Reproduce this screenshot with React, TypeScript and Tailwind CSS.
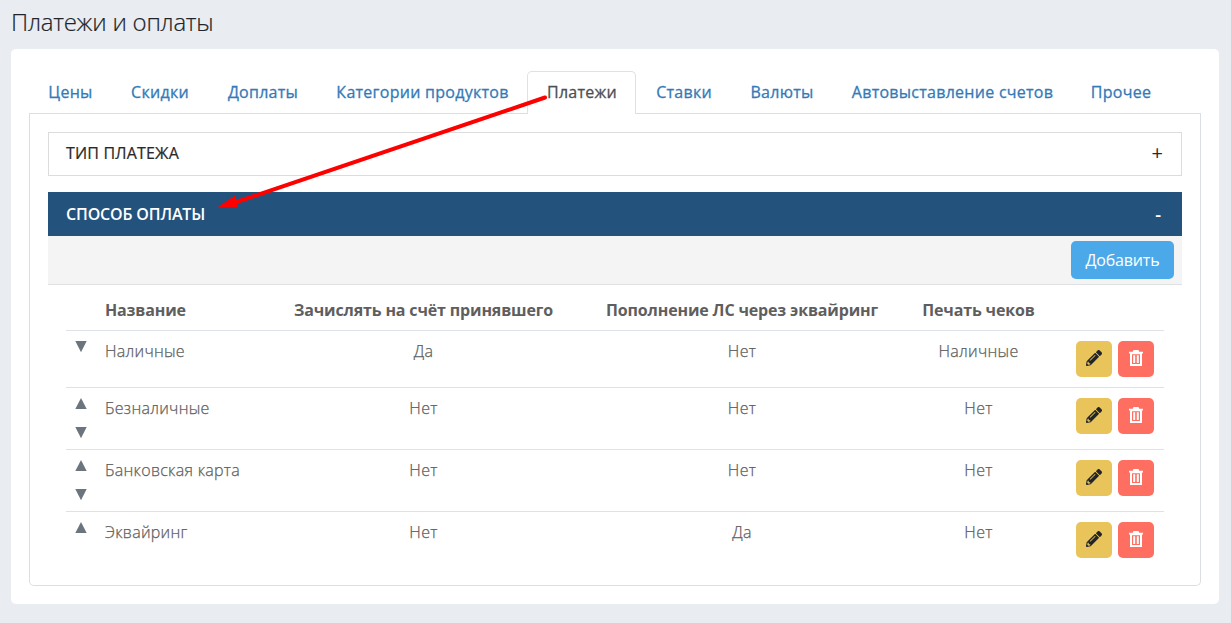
import React from "react";
import { FaPencilAlt } from "react-icons/fa";

const tabs = [
  { label: "Цены", width: "w-[82px]" },
  { label: "Скидки", width: "w-[97px]" },
  { label: "Доплаты", width: "w-[109px]" },
  { label: "Категории продуктов", width: "w-[210px]" },
  { label: "Платежи", width: "w-[109px]", active: true },
  { label: "Ставки", width: "w-[95px]" },
  { label: "Валюты", width: "w-[101px]" },
  { label: "Автовыставление счетов", width: "w-[240px]" },
  { label: "Прочее", width: "w-[97px]" },
];

const methods = [
  { name: "Наличные", credit: "Да", topUp: "Нет", receipt: "Наличные", height: "h-[57px]" },
  { name: "Безналичные", credit: "Нет", topUp: "Нет", receipt: "Нет", height: "h-[62px]" },
  { name: "Банковская карта", credit: "Нет", topUp: "Нет", receipt: "Нет", height: "h-[62px]" },
  { name: "Эквайринг", credit: "Нет", topUp: "Да", receipt: "Нет", height: "h-[57px]" },
];

const columns = "grid grid-cols-[39px_167px_303px_334px_139px_1fr]";

function TrashIcon() {
  return (
    <svg width="16" height="16" viewBox="0 0 16 16" fill="white">
      <path
        fillRule="evenodd"
        d="M5.5 0h5l.8 1.8H15V3.4H14V16H2V3.4H1V1.8h3.7zM4 4.2v9.8h8V4.2zM5.2 5.3h2v7.6h-2zM8.8 5.3h2v7.6h-2z"
      />
    </svg>
  );
}

function Arrow({ up = false }: { up?: boolean }) {
  return (
    <svg width="12" height="12" viewBox="0 0 12 12" fill="#6c757d">
      <path d={up ? "M6 0L11.7 11H.3z" : "M6 11.2L11.7 0H.3z"} />
    </svg>
  );
}

export default function App() {
  return (
    <div className="relative h-[623px] w-[1231px] overflow-hidden bg-[#e9edf2] px-[11px] font-['Open_Sans','Noto_Sans',sans-serif] text-base text-[#5e5e5e]">
      <h1 className="h-[49px] pt-[5px] text-2xl leading-[34px] font-light tracking-[-0.25px] text-[#212529] [-webkit-text-stroke:0.2px]">
        Платежи и оплаты
      </h1>

      <div className="h-[555px] w-[1208px] rounded-[5px] bg-white px-[18px] pt-[22px]">
        {/* Tabs */}
        <div className="flex h-[42px]">
          {tabs.map((tab) => (
            <div
              key={tab.label}
              className={`${tab.width} shrink-0 pl-px text-center leading-[40px] tracking-[0.27px] whitespace-nowrap [-webkit-text-stroke:0.3px] ${
                tab.active
                  ? "h-[43px] rounded-t-[5px] border border-b-0 border-[#dee2e6] bg-white text-[#4c4f53]"
                  : "pt-px text-[#337ab7]"
              }`}
            >
              {tab.label}
            </div>
          ))}
        </div>

        <div className="flex">
          <div className="h-px w-[498px] bg-[#dcdfe1]" />
          <div className="h-px w-[109px]" />
          <div className="h-px flex-1 bg-[#dcdfe1]" />
        </div>
        <div className="h-[472px] rounded-b-[5px] border border-t-0 border-[#dcdfe1] px-[18px] pt-[18px]">
          <div className="flex h-11 items-center justify-between border border-[#dcdcdc] px-[17px] pb-0.5 text-[#292929]">
            <span className="tracking-[0.18px] [-webkit-text-stroke:0.2px]">ТИП ПЛАТЕЖА</span>
            <span className="mr-px text-xl">+</span>
          </div>

          <div className="mt-4 flex h-11 items-center justify-between bg-[#23527c] px-[18px] font-semibold text-white">
            <span className="tracking-[-0.15px]">СПОСОБ ОПЛАТЫ</span>
            <span className="mr-[3px] text-lg">-</span>
          </div>
          <div className="flex h-[49px] justify-end border-b border-[#dfe1e3] bg-[#f4f4f4] pt-[5px] pr-2">
            <button className="h-[38px] w-[103px] rounded-[5px] bg-[#4ba9e9] tracking-[-0.15px] text-white">
              Добавить
            </button>
          </div>

          {/* Payment methods */}
          <div className="mx-[18px]">
            <div className={`${columns} h-[46px] border-b border-[#dee2e6] pt-[13px] font-bold tracking-[-0.15px]`}>
              <span />
              <span>Название</span>
              <span className="text-center">Зачислять на счёт принявшего</span>
              <span className="text-center">Пополнение ЛС через эквайринг</span>
              <span className="text-center">Печать чеков</span>
              <span />
            </div>
            {methods.map((row, i) => (
              <div
                key={row.name}
                className={`${columns} ${row.height} ${i < methods.length - 1 ? "border-b border-[#dee2e6]" : ""} font-light tracking-[0.28px] [-webkit-text-stroke:0.25px]`}
              >
                <div className="flex flex-col gap-[17px] pt-[10px] pl-[9px]">
                  {i > 0 && <Arrow up />}
                  {i < methods.length - 1 && <Arrow />}
                </div>
                <span className="pt-2">{row.name}</span>
                <span className="pt-2 text-center">{row.credit}</span>
                <span className="pt-2 text-center">{row.topUp}</span>
                <span className="pt-2 text-center">{row.receipt}</span>
                <div className="flex gap-1.5 pt-[10px] pl-7">
                  <button className="flex h-9 w-9 justify-center rounded-[5px] bg-[#e9c45a] pt-[9px]">
                    <FaPencilAlt size={16} className="text-[#212529]" />
                  </button>
                  <button className="flex h-9 w-9 justify-center rounded-[5px] bg-[#ff6f61] pt-[9px]">
                    <TrashIcon />
                  </button>
                </div>
              </div>
            ))}
          </div>
        </div>
      </div>

      {/* Red pointer from the active tab to the open section */}
      <svg className="pointer-events-none absolute inset-0" width="1231" height="623">
        <path d="M545 97.5L232 203.5" stroke="#f00" strokeWidth="4" strokeLinecap="round" />
        <path d="M218 207L235 195.5L238 207z" fill="#f00" />
      </svg>
    </div>
  );
}
